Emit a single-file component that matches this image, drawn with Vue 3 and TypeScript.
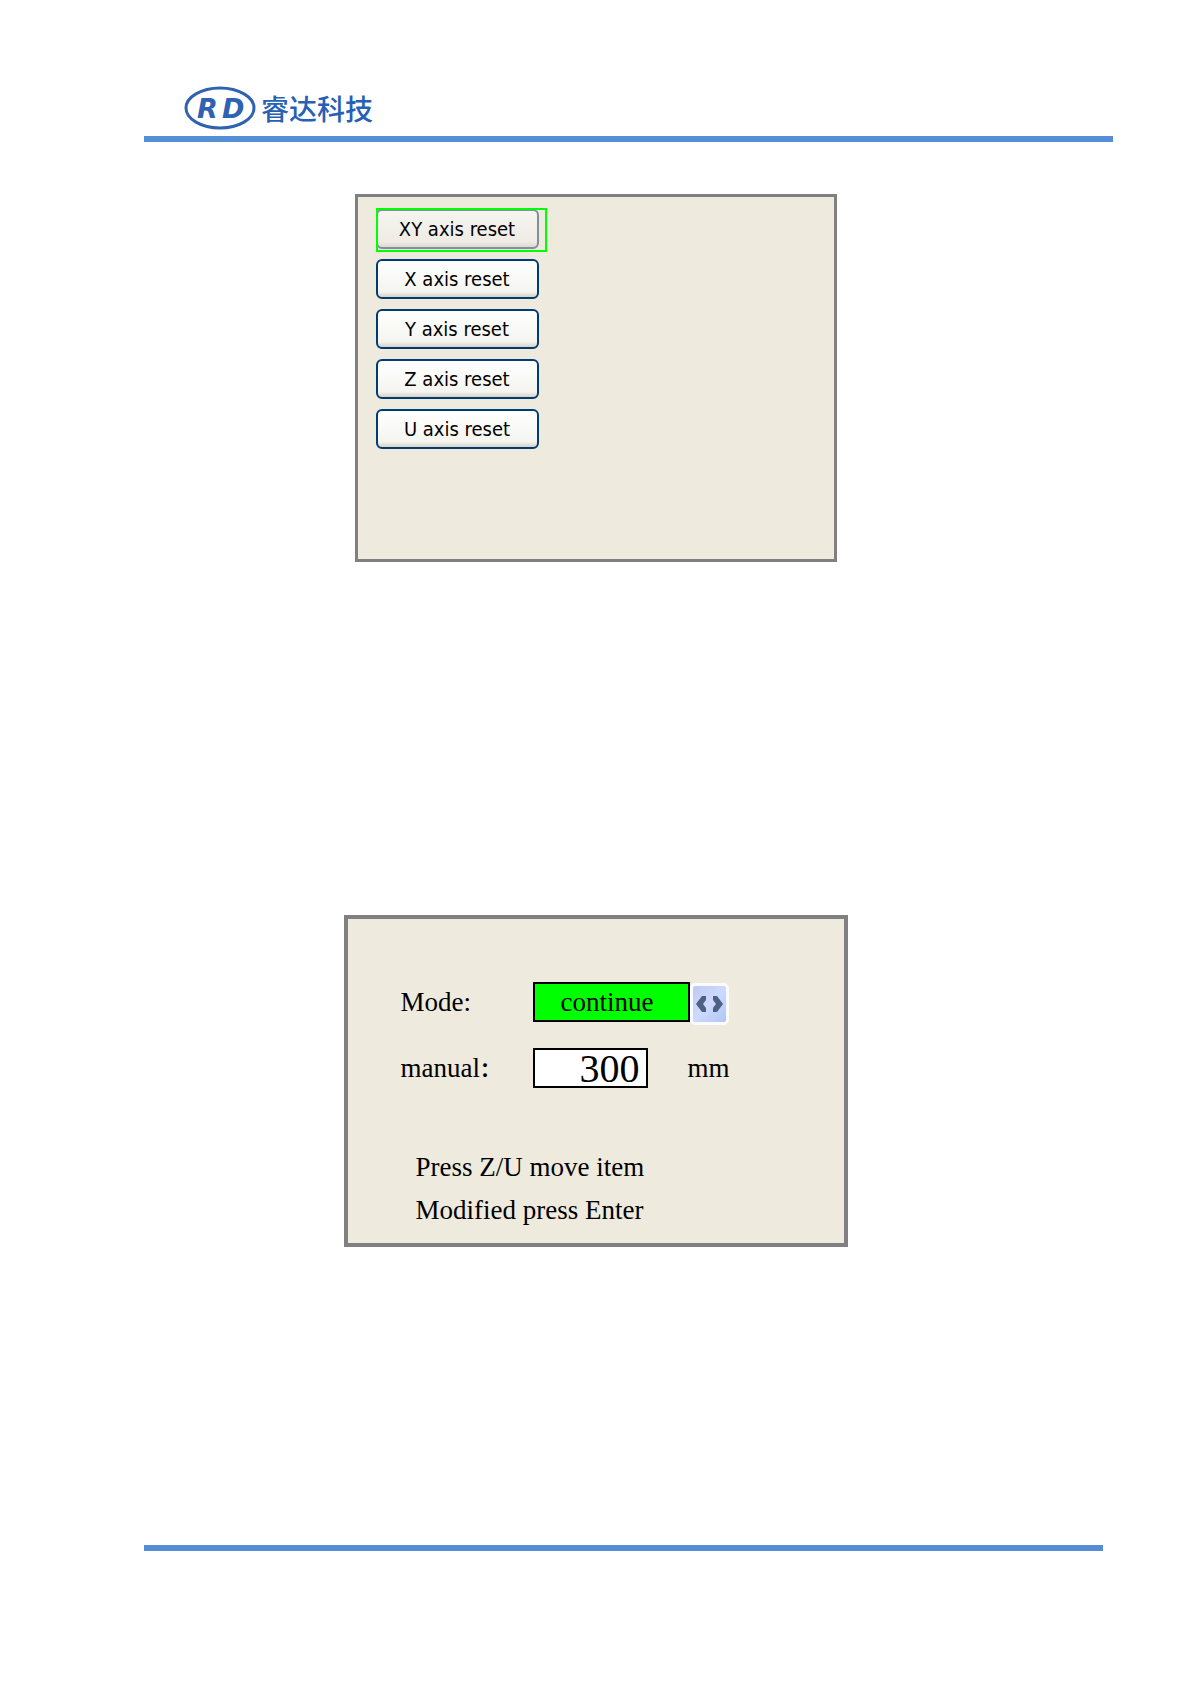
<script setup lang="ts">
import { ref } from 'vue'

const axes: string[] = ['XY', 'X', 'Y', 'Z', 'U']
const selected = ref<string>('XY')

const modes: string[] = ['continue', 'manual']
const modeIndex = ref<number>(0)
const distance = ref<string>('300')

function nextMode(): void {
  modeIndex.value = (modeIndex.value + 1) % modes.length
}
</script>

<template>
  <div class="page">
    <header class="page-header">
      <svg class="emblem" viewBox="0 0 72 46" role="img" aria-label="RD">
        <ellipse cx="36" cy="23" rx="34" ry="20" fill="none" stroke="#2f62b0" stroke-width="3" />
        <text x="13 38" y="33" class="emblem-text">RD</text>
      </svg>
      <span class="brand" lang="zh-CN">睿达科技</span>
    </header>

    <main class="content">
      <section class="panel reset-panel">
        <div
          v-for="axis in axes"
          :key="axis"
          class="reset-item"
          :class="{ selected: axis === selected }"
        >
          <button type="button" class="reset-button" @click="selected = axis">
            {{ axis }} axis reset
          </button>
        </div>
      </section>

      <section class="panel move-panel">
        <div class="row">
          <label class="row-label" for="mode">Mode:</label>
          <input id="mode" class="mode-value" type="text" readonly :value="modes[modeIndex]" />
          <button type="button" class="switch" aria-label="Change mode" @click="nextMode">
            <svg viewBox="0 0 33 36" width="33" height="36" aria-hidden="true">
              <path d="M3 18 L9 10 H13 V14 L10 18 L13 22 V26 H9 Z" />
              <path d="M30 18 L24 10 H20 V14 L23 18 L20 22 V26 H24 Z" />
            </svg>
          </button>
        </div>
        <div class="row">
          <label class="row-label" for="distance" lang="zh-CN">manual<span class="colon">：</span></label>
          <input id="distance" v-model="distance" class="distance" type="text" inputmode="numeric" />
          <span class="unit">mm</span>
        </div>
        <div class="hints">
          <p>Press Z/U move item</p>
          <p>Modified press Enter</p>
        </div>
      </section>
    </main>

    <footer class="page-footer"></footer>
  </div>
</template>

<style>
body {
  background: #fff;
}
</style>

<style scoped>
.page {
  box-sizing: border-box;
  padding: 82px 78px 132px 144px;
  color: #000;
  font-family: "Liberation Serif", "Noto Sans CJK SC", serif;
}

.page-header {
  display: flex;
  align-items: center;
  gap: 5px;
  height: 52px;
  padding: 0 0 2px 40px;
  border-bottom: 6px solid #558ed5;
}

.emblem {
  width: 72px;
  height: 46px;
}

.emblem-text {
  fill: #2f62b0;
  font: italic bold 27px "DejaVu Sans", sans-serif;
}

.brand {
  color: #2760b4;
  font: 500 28px/40px "Noto Sans CJK SC", sans-serif;
}

.content {
  display: flex;
  flex-direction: column;
  align-items: center;
  margin: 52px 66px 0 0;
}

.panel {
  box-sizing: border-box;
  max-width: 100%;
  background: #eeeade;
  border: 3px solid #808080;
}

.reset-panel {
  display: flex;
  flex-direction: column;
  align-items: flex-start;
  gap: 6px;
  width: 482px;
  min-height: 368px;
  padding: 11px 18px;
}

.reset-item {
  padding: 1px 8px 3px 0;
}

.reset-item.selected {
  outline: 2px solid #0f0;
  outline-offset: -2px;
}

.reset-button {
  box-sizing: border-box;
  display: block;
  width: 163px;
  height: 40px;
  padding: 0 0 1px;
  border: 2px solid #003c74;
  border-radius: 6px;
  background: linear-gradient(#fff, #f4f4f0 85%, #d8d2c6);
  color: #000;
  font: 20px/24px "DejaVu Sans Condensed", "Noto Sans", sans-serif;
}

.selected .reset-button {
  border-color: #7f909c;
  background: linear-gradient(#f6f4f0, #efece5 85%, #dfd8d2);
}

.move-panel {
  width: 504px;
  margin-top: 353px;
  padding: 63px 20px 11px 53px;
  border-width: 4px;
  font-size: 27px;
}

.row {
  display: flex;
  align-items: center;
  height: 40px;
  margin-bottom: 26px;
}

.row-label {
  flex: 0 0 132px;
  line-height: 40px;
  white-space: nowrap;
}

.colon {
  font-weight: bold;
  font-size: 20px;
  line-height: 0;
}

.mode-value,
.distance {
  box-sizing: border-box;
  height: 40px;
  margin: 0;
  border: 2px solid #000;
  border-radius: 0;
  color: #000;
  font-family: inherit;
}

.mode-value {
  width: 157px;
  padding: 0 8px 0 0;
  background: #0f0;
  font-size: 27px;
  text-align: center;
}

.distance {
  width: 115px;
  padding: 0 6px 0 0;
  background: #fff;
  font-size: 40px;
  text-align: right;
}

.switch {
  box-sizing: border-box;
  flex: none;
  width: 39px;
  height: 42px;
  margin-top: 4px;
  padding: 0;
  border: 3px solid #fafbff;
  border-radius: 5px;
  background: linear-gradient(135deg, #c0caee, #cdd9ff 50%, #b2c5f4);
  line-height: 0;
}

.switch path {
  fill: #4d6185;
}

.unit {
  margin-left: 40px;
}

.hints {
  margin-top: 58px;
  padding-left: 15px;
}

.hints p {
  margin: 0;
  line-height: 43px;
}

.page-footer {
  height: 6px;
  margin: 298px 10px 0 0;
  background: #558ed5;
}
</style>
